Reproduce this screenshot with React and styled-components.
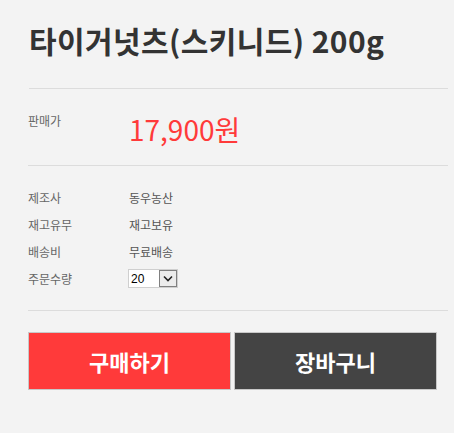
import React from 'react'
import styled, {createGlobalStyle} from 'styled-components'

const Global = createGlobalStyle`
  html, body {
    margin: 0;
    padding: 0;
    background: #f3f3f3;
  }
  body {
    font-family: "Noto Sans CJK KR", "Noto Sans", sans-serif;
  }
`

const Wrapper = styled.div`
  width: 420px;
  padding: 20px 6px 43px 28px;
`

const Title = styled.h1`
  margin: 0 0 0 1px;
  font-size: 30px;
  line-height: 40px;
  font-weight: 700;
  color: #333;
  letter-spacing: 0.4px;
  padding-bottom: 28px;
  border-bottom: 1px solid #dcdcdc;
`

const PriceRow = styled.div`
  display: flex;
  align-items: flex-start;
  padding: 22px 0 18px;
  border-bottom: 1px solid #dcdcdc;
`

const Label = styled.div`
  width: 101px;
  font-size: 12px;
  color: #666;
  line-height: ${p => p.lh || '27px'};
`

const Price = styled.div`
  font-size: 28px;
  line-height: 36px;
  color: #ff3a3a;
`

const InfoList = styled.div`
  padding: 18px 0 18px;
  border-bottom: 1px solid #dcdcdc;
`

const InfoRow = styled.div`
  display: flex;
  align-items: center;
  height: 27px;
`

const Value = styled.div`
  font-size: 12px;
  color: #555;
`

const SelectBox = styled.div`
  position: relative;
  width: 50px;
  height: 19px;
  margin-left: -1px;
`

const Select = styled.select`
  display: block;
  appearance: none;
  width: 100%;
  height: 100%;
  box-sizing: border-box;
  font-size: 12px;
  font-family: "Liberation Sans", sans-serif;
  color: #000;
  background: #fff;
  border: 1px solid #cfcfcf;
  border-radius: 0;
  padding: 0 0 0 2px;
  margin: 0;
  outline: none;
`

const Arrow = styled.span`
  position: absolute;
  top: 1px;
  right: 1px;
  width: 18px;
  height: 17px;
  box-sizing: border-box;
  border: 1px solid #808080;
  background: #ececec;
  display: flex;
  align-items: center;
  justify-content: center;
  pointer-events: none;
`

const Buttons = styled.div`
  display: flex;
  gap: 3px;
  padding-top: 21px;
`

const Button = styled.button`
  width: 203px;
  height: 58px;
  border: 1px solid #c8c8c8;
  background: ${p => (p.primary ? '#ff3a3a' : '#444444')};
  color: #fff;
  font-family: "Noto Sans CJK KR", sans-serif;
  font-size: 22px;
  font-weight: 700;
  letter-spacing: 0;
  cursor: pointer;
`

const info = [
  ['제조사', '동우농산'],
  ['재고유무', '재고보유'],
  ['배송비', '무료배송'],
]

export default function App() {
  return (
    <>
      <Global />
      <Wrapper>
        <Title>타이거넛츠(스키니드) 200g</Title>
        <PriceRow>
          <Label lh="20px">판매가</Label>
          <Price>17,900원</Price>
        </PriceRow>
        <InfoList>
          {info.map(([k, v]) => (
            <InfoRow key={k}>
              <Label>{k}</Label>
              <Value>{v}</Value>
            </InfoRow>
          ))}
          <InfoRow>
            <Label>주문수량</Label>
            <SelectBox>
              <Select defaultValue="20">
                {[...Array(30)].map((_, i) => (
                  <option key={i} value={i + 1}>{i + 1}</option>
                ))}
              </Select>
              <Arrow>
                <svg width="10" height="7" viewBox="0 0 10 7">
                  <path d="M1 1.5 L5 5.5 L9 1.5" fill="none" stroke="#222" strokeWidth="1.6" />
                </svg>
              </Arrow>
            </SelectBox>
          </InfoRow>
        </InfoList>
        <Buttons>
          <Button primary>구매하기</Button>
          <Button>장바구니</Button>
        </Buttons>
      </Wrapper>
    </>
  )
}
